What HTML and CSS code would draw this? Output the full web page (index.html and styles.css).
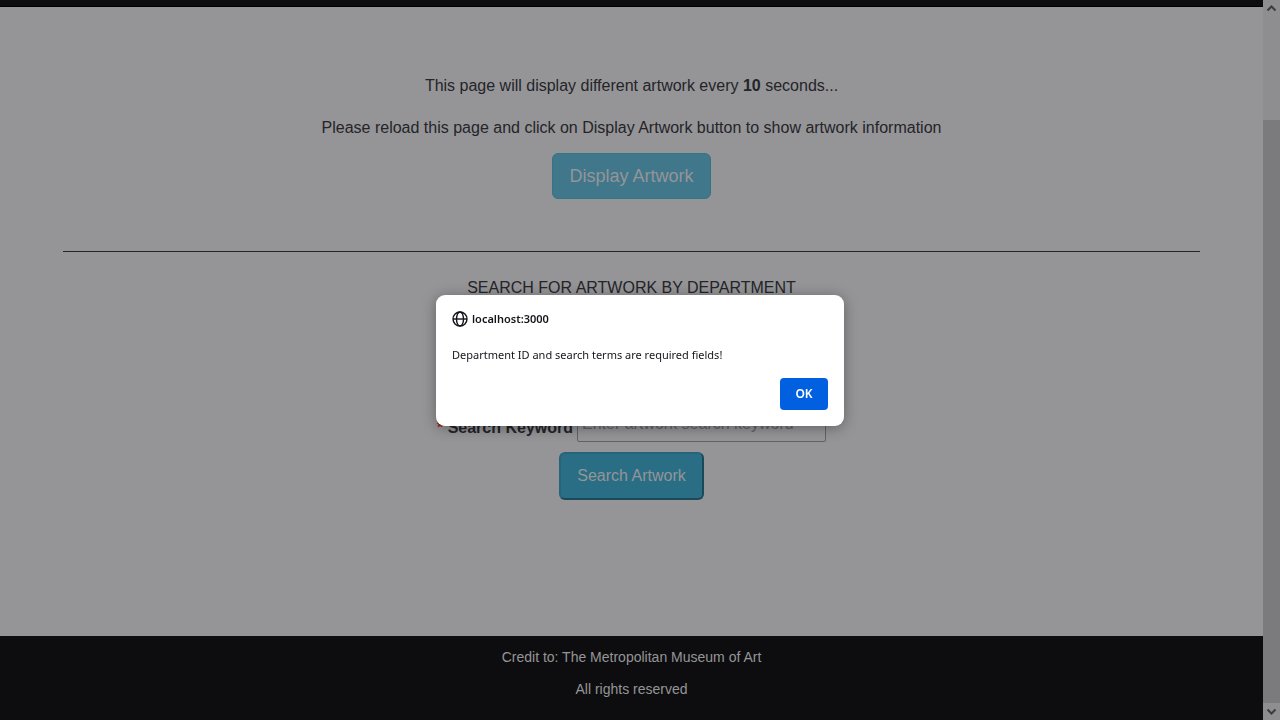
FILE: index.html
```html
<!DOCTYPE html>
<html lang="en">
<head>
<meta charset="utf-8">
<title>Artwork</title>
<link rel="stylesheet" href="styles.css">
</head>
<body>
<div class="page">
  <header class="topbar"></header>
  <main class="content">
    <section class="display">
      <p class="text">This page will display different artwork every <strong>10</strong> seconds...</p>
      <p class="text">Please reload this page and click on Display Artwork button to show artwork information</p>
      <button class="btn btn-display" type="button">Display Artwork</button>
    </section>
    <hr class="divider">
    <section class="search">
      <h2 class="heading">SEARCH FOR ARTWORK BY DEPARTMENT</h2>
      <form class="form">
        <div class="field">
          <label class="label" for="keyword"><span class="required">*</span> Search Keyword</label>
          <input class="input" id="keyword" type="text" placeholder="Enter artwork search keyword">
        </div>
        <button class="btn btn-search" type="button">Search Artwork</button>
      </form>
    </section>
  </main>
  <footer class="footer">
    <p class="credit">Credit to: The Metropolitan Museum of Art</p>
    <p class="credit">All rights reserved</p>
  </footer>
</div>
<div class="scrollbar" aria-hidden="true">
  <svg class="arrow" viewBox="0 0 17 17"><path d="M4.500 10.500 8.500 6.500l4 4"/></svg>
  <div class="track"><div class="thumb"></div></div>
  <svg class="arrow" viewBox="0 0 17 17"><path d="M4.500 6.500l4 4 4-4"/></svg>
</div>
<div class="overlay">
  <div class="dialog" role="alertdialog" aria-labelledby="origin" aria-describedby="message">
    <div class="origin">
      <svg class="globe" viewBox="0 0 16 16"><circle cx="8" cy="8" r="7"/><ellipse cx="8" cy="8" rx="3.500" ry="7"/><path d="M1 8h14"/></svg>
      <span id="origin">localhost:3000</span>
    </div>
    <p class="message" id="message">Department ID and search terms are required fields!</p>
    <button class="ok" type="button">OK</button>
  </div>
</div>
</body>
</html>
```
FILE: styles.css
```css
* { box-sizing: border-box; }
body {
  margin: 0;
  height: 100vh;
  display: flex;
  overflow: hidden;
  background: #959597;
  color: #242429;
  font-family: "Liberation Sans", Arial, sans-serif;
  font-size: 16px;
}
.page { flex: 1; display: flex; flex-direction: column; }
.topbar { height: 7px; background: #0d0d0f; border-bottom: 1px solid #000; }
.content { flex: 1; padding: 67px 5% 0; text-align: center; }
.display { display: flex; flex-direction: column; align-items: center; }
.text { margin: 0 0 18px; line-height: 24px; }
.text + .text { margin-bottom: 13px; }
.btn { font-family: inherit; color: #959597; border-radius: 6px; }
.btn-display {
  padding: 0 16px;
  height: 46px;
  border: 1px solid #377388;
  background: #40778b;
  font-size: 18px;
}
.divider { margin: 52px 0 24px; border: 0; border-top: 1px solid #242429; }
.heading { margin: 0; font-size: 16px; font-weight: 400; line-height: 24px; }
.form { margin-top: 106px; display: flex; flex-direction: column; align-items: center; gap: 10px; }
.field { display: flex; align-items: center; gap: 4px; }
.label { padding-top: 8px; font-weight: 700; }
.required { color: #a01818; }
.input {
  width: 249px;
  height: 36px;
  padding: 0 4px;
  border: 1px solid #626268;
  border-radius: 2px;
  background: #959597;
  font-family: inherit;
  font-size: 16px;
}
.input::placeholder { color: #626268; opacity: 1; }
.btn-search {
  padding: 0 16px;
  height: 48px;
  border: 2px solid;
  border-color: #25647a #1c4959 #1c4959 #25647a;
  background: #2a6e85;
  font-size: 16px;
}
.footer { height: 84px; padding-top: 9px; background: #0d0d0f; color: #959597; text-align: center; }
.credit { margin: 0 0 8px; font-size: 14px; line-height: 24px; }
.scrollbar { width: 17px; display: flex; flex-direction: column; background: #8e8e90; }
.arrow { width: 17px; height: 17px; fill: none; stroke: #3c3c3e; stroke-width: 2; }
.track { flex: 1; display: flex; flex-direction: column; justify-content: flex-end; }
.thumb { height: 85%; background: #7b7b7d; }
.overlay { position: fixed; inset: 0; display: flex; align-items: center; justify-content: center; }
.dialog {
  width: 408px;
  padding: 16px;
  display: flex;
  flex-direction: column;
  border-radius: 9px;
  background: #fff;
  color: #15141a;
  box-shadow: 0 2px 14px rgba(0, 0, 0, 0.35);
  font-family: "Noto Sans", "Segoe UI", sans-serif;
  font-size: 11px;
  line-height: 16px;
}
.origin { display: flex; align-items: center; gap: 4px; font-weight: 600; }
.globe { width: 16px; height: 16px; fill: none; stroke: #15141a; stroke-width: 1.400; }
.message { margin: 20px 0 15px; }
.ok {
  align-self: flex-end;
  width: 48px;
  height: 32px;
  border: 0;
  border-radius: 4px;
  background: #0060df;
  color: #fff;
  font-family: inherit;
  font-size: 12px;
  font-weight: 600;
}
```
